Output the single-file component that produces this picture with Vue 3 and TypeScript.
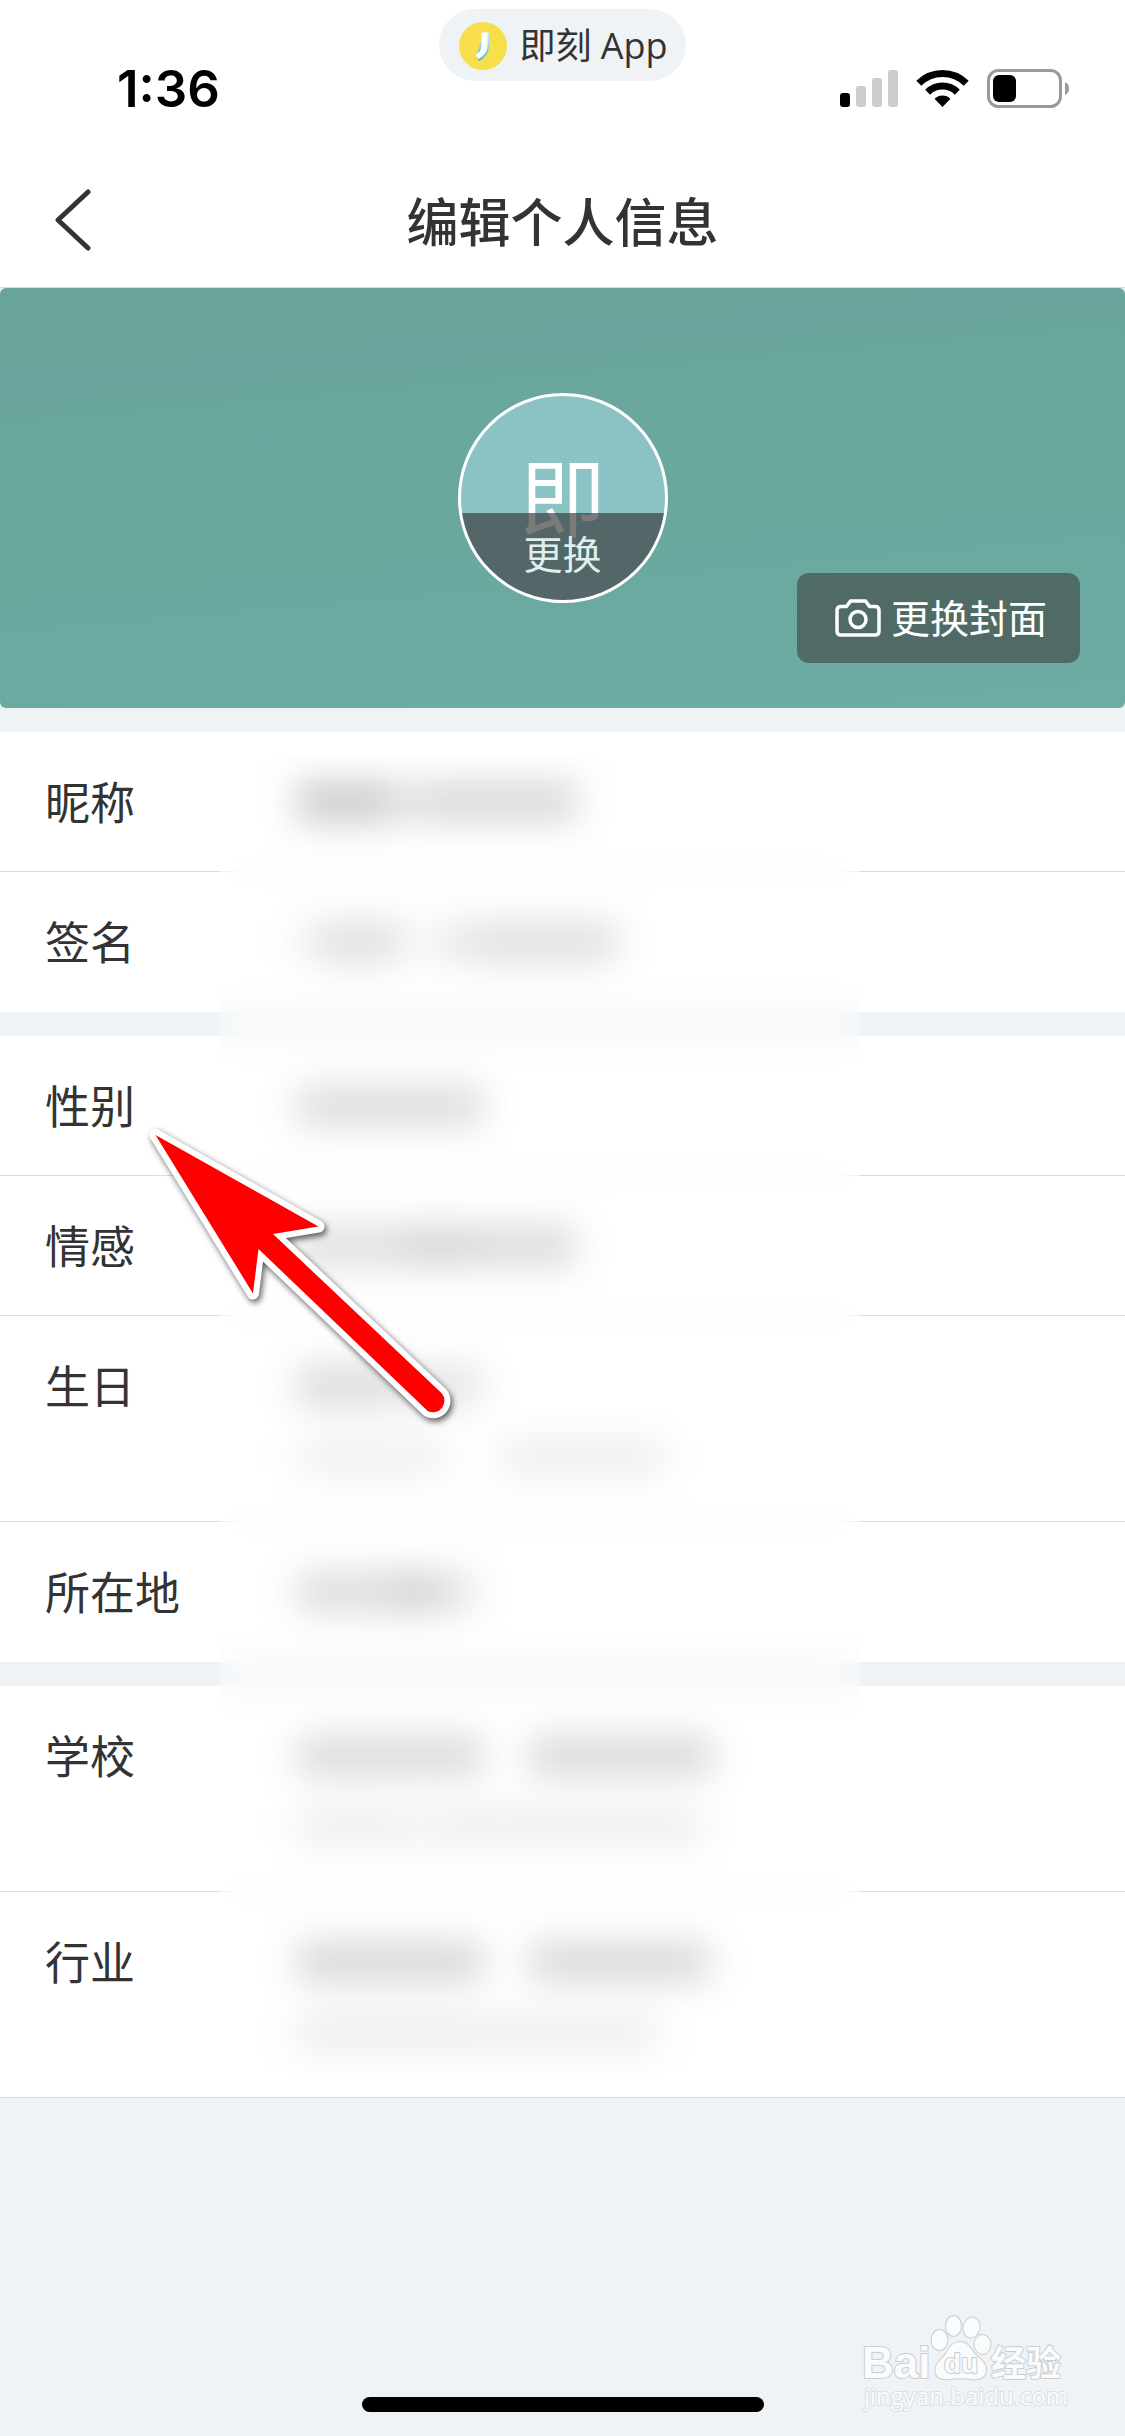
<script setup lang="ts">
interface Block {
  width: number
  tone: string
}

interface Field {
  label: string
  value: Block[]
  hint?: Block[]
}

const CLEAR = 'transparent'

// Each value is hidden behind the privacy veil, so only its ink density is kept.
const groups: Field[][] = [
  [
    {
      label: '昵称',
      value: [
        { width: 92, tone: '#cacaca' },
        { width: 36, tone: '#e2e2e2' },
        { width: 152, tone: '#d8d8d8' },
      ],
    },
    {
      label: '签名',
      value: [
        { width: 24, tone: '#f0f0f0' },
        { width: 78, tone: '#dedede' },
        { width: 42, tone: '#f8f8f8' },
        { width: 34, tone: '#e8e8e8' },
        { width: 142, tone: '#dfdfdf' },
      ],
    },
  ],
  [
    { label: '性别', value: [{ width: 186, tone: '#dcdcdc' }] },
    {
      label: '情感',
      value: [
        { width: 110, tone: '#dedede' },
        { width: 60, tone: '#d4d4d4' },
        { width: 108, tone: '#dadada' },
      ],
    },
    {
      label: '生日',
      value: [
        { width: 90, tone: '#dadada' },
        { width: 94, tone: '#e4e4e4' },
      ],
      hint: [
        { width: 148, tone: '#efefef' },
        { width: 56, tone: CLEAR },
        { width: 164, tone: '#ededed' },
      ],
    },
    {
      label: '所在地',
      value: [
        { width: 90, tone: '#dcdcdc' },
        { width: 56, tone: '#d2d2d2' },
        { width: 34, tone: '#e6e6e6' },
      ],
    },
  ],
  [
    {
      label: '学校',
      value: [
        { width: 186, tone: '#dadada' },
        { width: 46, tone: CLEAR },
        { width: 184, tone: '#d9d9d9' },
      ],
      hint: [
        { width: 110, tone: '#ededed' },
        { width: 30, tone: '#f3f3f3' },
        { width: 266, tone: '#ededed' },
      ],
    },
    {
      label: '行业',
      value: [
        { width: 186, tone: '#d7d7d7' },
        { width: 46, tone: CLEAR },
        { width: 180, tone: '#d9d9d9' },
      ],
      hint: [
        { width: 190, tone: '#ebebeb' },
        { width: 170, tone: '#ededed' },
      ],
    },
  ],
]
</script>

<template>
  <div class="page">
    <header class="top">
      <div class="status">
        <span class="time">1:36</span>
        <div class="pill">
          <svg class="logo" viewBox="0 0 48 48" aria-hidden="true">
            <defs>
              <linearGradient id="jShade" x1="0" y1="0" x2="0" y2="1">
                <stop offset="0" stop-color="#d9f1f4" />
                <stop offset="1" stop-color="#3fb4dc" />
              </linearGradient>
            </defs>
            <circle cx="24" cy="24" r="24" fill="#f9de4b" />
            <path d="M24 10.500H30V24C30 31 26 35.500 20 39L17.500 35Z" fill="url(#jShade)" />
            <path d="M22.500 10.500H28.500V23C28.500 30 25 34 19.500 37L16.500 33C20.500 30.500 22.500 28 22.500 23Z" fill="#fff" />
          </svg>
          <span>即刻 App</span>
        </div>
        <svg class="indicators" viewBox="0 0 230 40" aria-hidden="true">
          <rect x="0" y="24" width="10" height="14" rx="3" />
          <g fill="#ccc">
            <rect x="16" y="17" width="10" height="21" rx="3" />
            <rect x="32" y="9" width="10" height="29" rx="3" />
            <rect x="48" y="1" width="10" height="37" rx="3" />
          </g>
          <g fill="none" stroke="#000" stroke-width="7">
            <path d="M78.800 14.300A33.500 33.500 0 0 1 126.200 14.300" />
            <path d="M87.700 23.200A21 21 0 0 1 117.300 23.200" />
          </g>
          <path d="M102.500 38L95 30.200Q94.500 29.500 95.300 29A11.700 11.700 0 0 1 109.700 29Q110.500 29.500 110 30.200Z" />
          <rect x="148.500" y="1.500" width="72" height="36" rx="10" fill="none" stroke="#999" stroke-width="3" />
          <rect x="153" y="6" width="23" height="27" rx="6" />
          <path d="M225 13C227.500 14 229 16.500 229 19.500S227.500 25 225 26Z" fill="#999" />
        </svg>
      </div>
      <nav class="nav">
        <button class="back" type="button" aria-label="返回">
          <svg viewBox="0 0 38 62" aria-hidden="true">
            <path d="M34 3L4 31L34 59" fill="none" stroke="#333" stroke-width="5" stroke-linecap="round" stroke-linejoin="round" />
          </svg>
        </button>
        <h1>编辑个人信息</h1>
      </nav>
    </header>

    <section class="cover">
      <button class="avatar" type="button">
        <span class="initial">即</span>
        <span class="swap">更换</span>
      </button>
      <button class="change-cover" type="button">
        <svg viewBox="0 0 46 38" aria-hidden="true">
          <g fill="none" stroke="#fff" stroke-width="3.500" stroke-linejoin="round">
            <path d="M6 7.500H11.500L15.500 2H30.500L34.500 7.500H40Q44 7.500 44 11.500V32Q44 36 40 36H6Q2 36 2 32V11.500Q2 7.500 6 7.500Z" />
            <circle cx="23" cy="20.500" r="8" />
          </g>
        </svg>
        <span>更换封面</span>
      </button>
    </section>

    <main class="fields">
      <ul v-for="(group, g) in groups" :key="g" class="group">
        <li v-for="field in group" :key="field.label" class="row">
          <span class="label">{{ field.label }}</span>
          <div class="value">
            <div class="line">
              <i v-for="(b, i) in field.value" :key="i" :style="{ width: b.width + 'px', background: b.tone }"></i>
            </div>
            <div v-if="field.hint" class="line hint">
              <i v-for="(b, i) in field.hint" :key="i" :style="{ width: b.width + 'px', background: b.tone }"></i>
            </div>
          </div>
        </li>
      </ul>
      <div class="veil"></div>
      <svg class="arrow" viewBox="0 0 330 320" aria-hidden="true">
        <path
          d="M15.500 15L178.500 106.500L133 114L301.700 273.300A11.500 11.500 0 0 1 287.700 291L118.500 129L113 173.500Z"
          fill="#fff" stroke="#fff" stroke-width="12" stroke-linejoin="round"
        />
        <path
          d="M15.500 15L178.500 106.500L133 114L301.700 273.300A11.500 11.500 0 0 1 287.700 291L118.500 129L113 173.500Z"
          fill="#f00"
        />
      </svg>
    </main>

    <footer class="bottom">
      <div class="home-bar"></div>
      <svg class="watermark" viewBox="0 0 220 110" role="img" aria-label="Baidu 经验">
        <g fill="#fafbfc" stroke="#c9cdd0" stroke-width="2" stroke-linejoin="round" paint-order="stroke">
          <text class="latin" x="2" y="68">Bai</text>
          <ellipse cx="79.500" cy="30" rx="8" ry="10" />
          <ellipse cx="93.500" cy="16" rx="7.500" ry="10" />
          <ellipse cx="111.500" cy="17.500" rx="8" ry="10" transform="rotate(14 111.500 17.500)" />
          <ellipse cx="122.500" cy="34.500" rx="8" ry="9.500" />
          <path d="M100 32C107 32 110 37 114 43C119 49 127 52 126 61C125 68 119 70 112 69C104 68 97 68 89 69C80 70 75 67 75.500 59C76 52 83 49 87 42C90 36 94 32 100 32Z" />
          <text class="du" x="84" y="63">du</text>
          <text class="cjk" x="131" y="66">经验</text>
          <text class="url" x="4" y="95">jingyan.baidu.com</text>
        </g>
      </svg>
    </footer>
  </div>
</template>

<style>
body {
  margin: 0;
  background: #eff3f6;
}
</style>

<style scoped>
.page {
  position: relative;
  display: flex;
  flex-direction: column;
  min-height: 100vh;
  background: #eff3f6;
  color: #333;
  font-family: 'Open Sans', 'Noto Sans CJK SC', sans-serif;
}

button {
  border: 0;
  padding: 0;
  background: none;
  color: inherit;
  font: inherit;
}

.top {
  background: #fff;
  border-bottom: 1px solid #ddd;
}

.status {
  display: grid;
  grid-template-columns: 1fr auto 1fr;
  align-items: start;
  height: 156px;
}

.time {
  margin: 59px 0 0 117px;
  color: #000;
  font: 600 51px/60px Inter, 'Liberation Sans', sans-serif;
}

.pill {
  display: flex;
  align-items: center;
  gap: 12px;
  height: 72px;
  margin-top: 9px;
  padding: 2px 18px 0 20px;
  border-radius: 36px;
  background: #eff3f6;
  box-sizing: border-box;
  font-size: 36px;
  line-height: 48px;
  white-space: nowrap;
}

.logo {
  width: 48px;
  height: 48px;
}

.indicators {
  width: 230px;
  height: 40px;
  margin: 69px 55px 0 0;
  justify-self: end;
}

.nav {
  display: grid;
  grid-template-columns: 1fr auto 1fr;
  align-items: center;
  height: 127px;
  padding: 0 54px 4px;
}

.back {
  justify-self: start;
  display: flex;
}

.back svg {
  width: 38px;
  height: 62px;
}

h1 {
  margin: 0;
  font-size: 52px;
  line-height: 72px;
  font-weight: 500;
  font-family: 'Noto Sans CJK SC', sans-serif;
}

.cover {
  position: relative;
  display: flex;
  align-items: center;
  justify-content: center;
  height: 420px;
  border-radius: 6px;
  background: linear-gradient(175deg, #69a49b, #6aa89e 50%, #6caca3);
}

.avatar {
  position: relative;
  width: 210px;
  height: 210px;
  border: 3px solid #fff;
  border-radius: 50%;
  overflow: hidden;
  background: #8bc3c4;
  color: #fff;
  box-sizing: border-box;
}

.initial {
  display: block;
  font-size: 86px;
  line-height: 204px;
}

.swap {
  position: absolute;
  inset: auto 0 0;
  padding-bottom: 5px;
  background: rgba(57, 57, 57, 0.67);
  color: #ddefee;
  font-size: 39px;
  line-height: 82px;
}

.change-cover {
  position: absolute;
  right: 45px;
  bottom: 45px;
  display: flex;
  align-items: center;
  gap: 10px;
  height: 90px;
  padding: 0 33px 0 38px;
  border-radius: 12px;
  background: rgba(59, 58, 58, 0.57);
  color: #fff;
  font-size: 39px;
  line-height: 60px;
}

.change-cover svg {
  width: 46px;
  height: 38px;
}

.fields {
  position: relative;
}

.group {
  margin: 24px 0 0;
  padding: 0;
  list-style: none;
  background: #fff;
}

.row {
  display: flex;
  align-items: flex-start;
  border-bottom: 1px solid #ddd;
}

.group:not(:nth-of-type(3)) .row:last-child {
  border-color: #fff;
}

.label {
  width: 252px;
  padding: 41px 0 38px 45px;
  font-size: 45px;
  line-height: 60px;
}

.value {
  display: flex;
  flex-direction: column;
  gap: 34px;
  padding: 50px 0 47px;
}

.value:not(:has(.hint)) {
  padding-bottom: 0;
}

.line {
  display: flex;
  height: 40px;
}

.hint {
  height: 34px;
}

.veil {
  position: absolute;
  inset: 48px 265px 18px 219px;
  backdrop-filter: blur(18px);
}

.arrow {
  position: absolute;
  left: 140px;
  top: 412px;
  width: 330px;
  height: 320px;
  filter: drop-shadow(2px 3px 3px rgba(0, 0, 0, 0.65));
}

.bottom {
  position: relative;
  display: flex;
  flex: 1;
  align-items: flex-end;
  justify-content: center;
  padding-bottom: 24px;
}

.home-bar {
  width: 402px;
  height: 15px;
  border-radius: 8px;
  background: #000;
}

.watermark {
  position: absolute;
  right: 45px;
  bottom: 16px;
  width: 220px;
  height: 110px;
}

.latin {
  font: 700 44px 'Liberation Sans', sans-serif;
}

.du {
  font: 700 28px 'Liberation Sans', sans-serif;
}

.cjk {
  font: 700 35px 'Noto Sans CJK SC', sans-serif;
}

.url {
  font: 400 24px 'Open Sans', sans-serif;
  stroke: #dcdfe2;
}
</style>
